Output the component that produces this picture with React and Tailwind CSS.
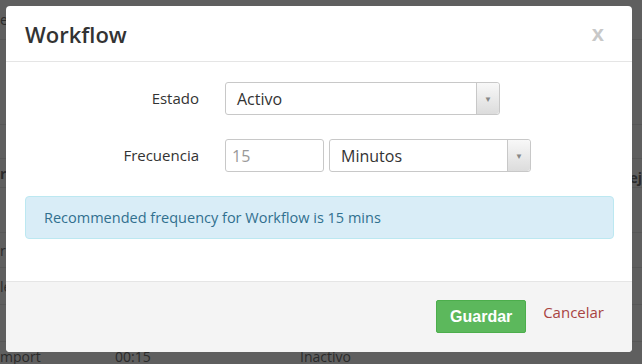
const bgRows = [
  { h: 'h-[40px]', cells: ['e', '', ''] },
  { h: 'h-[85px]', cells: ['', '', ''] },
  { h: 'h-[34px]', cells: ['', '', ''] },
  { h: 'h-[29px]', cells: ['r', '', ''], bold: true },
  { h: 'h-[45px]', cells: ['', '', ''] },
  { h: 'h-[35px]', cells: ['ro', '', ''] },
  { h: 'h-[37px]', cells: ['le', '', ''] },
  { h: 'h-[37px]', cells: ['', '', ''] },
  { h: 'h-[30px]', cells: ['mport', '00:15', 'Inactivo'] },
]

function SelectBox({ value, width }) {
  return (
    <div className={`flex h-[33px] ${width} rounded-[3px] border border-[#c8c8c8] bg-white`}>
      <div className="flex flex-1 items-center pl-[11px] text-[16px] text-[#333]">{value}</div>
      <div className="flex w-[23px] items-center justify-center rounded-r-[3px] border-l border-[#c8c8c8] bg-gradient-to-b from-[#f8f8f8] to-[#dcdcdc]">
        <span className="text-[8px] text-[#888]">▼</span>
      </div>
    </div>
  )
}

export default function App() {
  return (
    <div className="relative h-[364px] w-[642px] overflow-hidden bg-[#5f5f5f] font-['Open_Sans',sans-serif]">
      <div className="flex flex-col">
        {bgRows.map((row, i) => (
          <div key={i} className={`flex ${row.h} items-center border-b border-[#575757] text-[14px] text-[#2a2a2a] ${row.bold ? 'font-bold' : ''}`}>
            <div className="w-[115px]">{row.cells[0]}</div>
            <div className="w-[185px]">{row.cells[1]}</div>
            <div className="flex-1">{row.cells[2]}</div>
            {i === 3 && <div className="pt-[8px] text-right">ej</div>}
          </div>
        ))}
      </div>

      <div className="absolute left-[6px] top-[6px] flex h-[346px] w-[626px] flex-col overflow-hidden rounded-[4px] bg-white">
        <div className="flex h-[56px] items-center justify-between border-b border-[#e5e5e5] pl-[19px] pr-[28px]">
          <h1 className="pt-[2px] text-[22px] font-semibold text-[#333]">Workflow</h1>
          <span className="font-['Liberation_Sans',sans-serif] text-[22px] font-bold text-[#c8c8c8]">x</span>
        </div>

        <div className="flex flex-1 flex-col pt-[20px]">
          <div className="flex items-center">
            <label className="w-[193px] text-right text-[15px] text-[#333]">Estado</label>
            <div className="ml-[26px]">
              <SelectBox value="Activo" width="w-[275px]" />
            </div>
          </div>
          <div className="mt-[24px] flex items-center">
            <label className="w-[193px] text-right text-[15px] text-[#333]">Frecuencia</label>
            <div className="ml-[26px] flex gap-[5px]">
              <div className="flex h-[33px] w-[99px] items-center rounded-[3px] border border-[#c8c8c8] bg-white pl-[6px] text-[16px] text-[#999]">
                15
              </div>
              <SelectBox value="Minutos" width="w-[202px]" />
            </div>
          </div>
          <div className="ml-[19px] mr-[18px] mt-[24px] flex h-[43px] items-center rounded-[4px] border border-[#bce8f1] bg-[#d9edf7] pl-[18px] text-[14.5px] text-[#31708f]">
            Recommended frequency for Workflow is 15 mins
          </div>
        </div>

        <div className="flex h-[71px] items-start justify-end border-t border-[#e5e5e5] bg-[#f4f4f4] pr-[28px] pt-[18px]">
          <button className="h-[33px] w-[90px] rounded-[2px] border border-[#4cae4c] bg-[#5cb85c] font-['Liberation_Sans',sans-serif] text-[16px] font-bold text-white">
            Guardar
          </button>
          <span className="ml-[17px] mt-[1px] text-[15px] text-[#a94442]">Cancelar</span>
        </div>
      </div>
    </div>
  )
}
